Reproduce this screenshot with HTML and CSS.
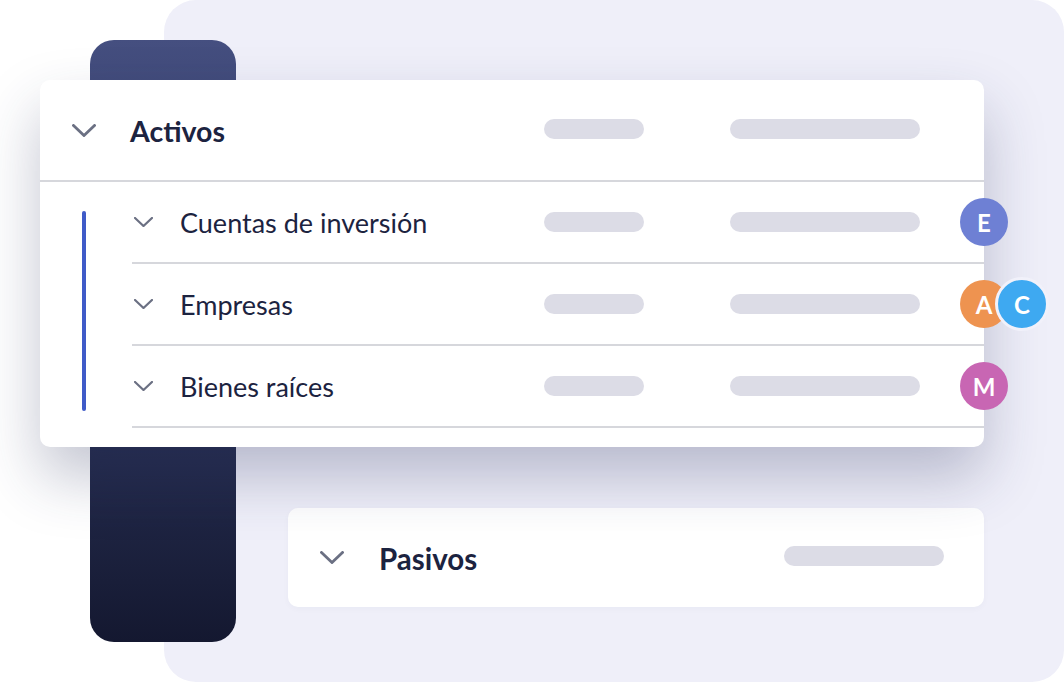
FILE: index.html
```html
<!DOCTYPE html>
<html lang="es">
<head>
<meta charset="utf-8">
<title>Activos y pasivos</title>
<link rel="stylesheet" href="styles.css">
</head>
<body>
<div class="stage">
  <div class="panel"></div>
  <div class="pillar"></div>

  <section class="card card-main">
    <div class="head">
      <svg class="chev chev-lg" viewBox="0 0 24 13"><path d="M1.5 1.5 L12 11.5 L22.5 1.5"/></svg>
      <h2 class="title">Activos</h2>
      <span class="pill pill-a"></span>
      <span class="pill pill-b"></span>
    </div>
    <div class="body">
      <div class="rail"></div>
      <ul class="rows">
        <li class="row">
          <svg class="chev chev-sm" viewBox="0 0 19 10"><path d="M1 1 L9.5 9 L18 1"/></svg>
          <span class="label">Cuentas de inversión</span>
          <span class="pill pill-a"></span>
          <span class="pill pill-b"></span>
          <span class="avatars"><span class="av av-e">E</span></span>
        </li>
        <li class="row">
          <svg class="chev chev-sm" viewBox="0 0 19 10"><path d="M1 1 L9.5 9 L18 1"/></svg>
          <span class="label">Empresas</span>
          <span class="pill pill-a"></span>
          <span class="pill pill-b"></span>
          <span class="avatars"><span class="av av-a">A</span><span class="av av-c">C</span></span>
        </li>
        <li class="row">
          <svg class="chev chev-sm" viewBox="0 0 19 10"><path d="M1 1 L9.5 9 L18 1"/></svg>
          <span class="label">Bienes raíces</span>
          <span class="pill pill-a"></span>
          <span class="pill pill-b"></span>
          <span class="avatars"><span class="av av-m">M</span></span>
        </li>
      </ul>
    </div>
  </section>

  <section class="card card-pas">
    <svg class="chev chev-lg" viewBox="0 0 24 13"><path d="M1.5 1.5 L12 11.5 L22.5 1.5"/></svg>
    <h2 class="title">Pasivos</h2>
    <span class="pill pill-c"></span>
  </section>
</div>
</body>
</html>
```

FILE: styles.css
```css
* { box-sizing: border-box; }
html, body { margin: 0; padding: 0; background: #ffffff; }
body { font-family: Lato, "Open Sans", sans-serif; color: #1c2340; }

.stage {
  position: relative;
  width: 1064px;
  height: 682px;
  overflow: hidden;
  padding-top: 80px;
}

.panel {
  position: absolute;
  left: 164px;
  top: 0;
  width: 900px;
  height: 682px;
  border-radius: 32px;
  background: #efeff9;
}

.pillar {
  position: absolute;
  left: 90px;
  top: 40px;
  width: 146px;
  height: 602px;
  border-radius: 24px;
  background: linear-gradient(180deg, #454f80 0%, #232a4b 70%, #141830 100%);
}

.card {
  position: relative;
  background: #ffffff;
  border-radius: 10px;
}

.card-main {
  margin-left: 40px;
  width: 944px;
  height: 367px;
  box-shadow: 0 30px 60px rgba(40, 48, 90, 0.28);
  z-index: 2;
}

.head {
  height: 102px;
  display: flex;
  align-items: center;
  padding-left: 32px;
  border-bottom: 2px solid #d6d7dc;
}

.chev { fill: none; stroke: #6b7083; stroke-linecap: square; }
.chev-lg { width: 24px; height: 13px; stroke-width: 2.8; flex: none; }
.chev-sm { width: 19px; height: 10px; stroke-width: 2.2; flex: none; margin-left: 2px; }

.title {
  margin: 0 0 0 34px;
  font-size: 28.5px;
  font-weight: 700;
  width: 414px;
  flex: none;
  line-height: 1;
  padding-top: 2px;
}

.pill {
  display: block;
  height: 20px;
  border-radius: 10px;
  background: #dcdce6;
  flex: none;
}
.pill-a { width: 100px; }
.pill-b { width: 190px; margin-left: 86px; }
.pill-c { width: 160px; margin-left: auto; margin-right: 40px; }

.head .pill { margin-top: -2px; }

.body {
  display: flex;
  padding-left: 42px;
}

.rail {
  width: 4px;
  height: 200px;
  margin-top: 29px;
  border-radius: 2px;
  background: #3f5bc8;
  flex: none;
}

.rows {
  list-style: none;
  margin: 0 0 0 46px;
  padding: 0;
  width: 852px;
  min-width: 0;
  flex: none;
}

.row {
  height: 82px;
  display: flex;
  align-items: center;
  border-bottom: 2px solid #d6d7dc;
}

.label {
  margin-left: 27px;
  font-size: 27px;
  font-weight: 400;
  width: 364px;
  flex: none;
  white-space: nowrap;
}

.avatars {
  display: flex;
  align-items: center;
  margin-left: 40px;
  flex: none;
}

.av {
  width: 48px;
  height: 48px;
  border-radius: 50%;
  display: flex;
  align-items: center;
  justify-content: center;
  color: #ffffff;
  font-weight: 700;
  font-size: 24px;
  flex: none;
}
.av-e { background: #6e80d4; }
.av-a { background: #ee9350; }
.av-c { background: #3ea9f1; width: 54px; height: 54px; margin-left: -13px; border: 3px solid #f1f1fa; }
.av-m { background: #c866b3; }

.card-pas {
  margin-left: 288px;
  margin-top: 61px;
  width: 696px;
  height: 99px;
  display: flex;
  align-items: center;
  padding-left: 32px;
  box-shadow: 0 2px 6px rgba(40, 48, 90, 0.03);
}
.card-pas .title { width: auto; margin-left: 35px; font-size: 29.5px; }
.card-pas .pill-c { margin-top: -4px; }
```
